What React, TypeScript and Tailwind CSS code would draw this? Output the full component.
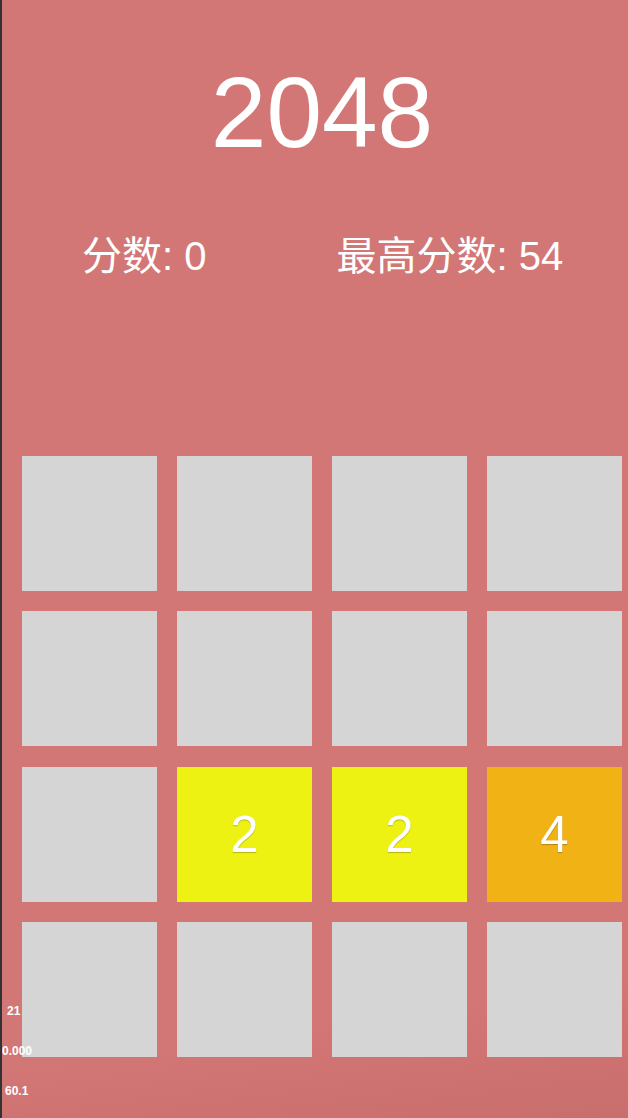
import React from "react";

const board = [
  [0, 0, 0, 0],
  [0, 0, 0, 0],
  [0, 2, 2, 4],
  [0, 0, 0, 0],
];

const tileColor: Record<number, string> = {
  0: "bg-[#d5d5d5]",
  2: "bg-[#eef213]",
  4: "bg-[#f0b214]",
};

export default function App() {
  return (
    <div
      className="relative min-h-[1118px] w-full overflow-hidden border-l-2 border-[#333333] bg-[#d37776] bg-[linear-gradient(172deg,#d37776_88%,#c86e6d_100%)] pl-[20px] text-white"
      style={{ fontFamily: '"Liberation Sans", "Noto Sans CJK SC", sans-serif' }}
    >
      <div className="w-[600px]">
        {/* Title */}
        <h1 className="pt-[62px] text-center text-[100px] leading-none font-normal">2048</h1>

        {/* Scores */}
        <div className="mt-[74px] flex text-[40px] leading-none">
          <span className="ml-[60px]">分数: 0</span>
          <span className="ml-[130px]">最高分数: 54</span>
        </div>

        {/* Board */}
        <div className="mt-[180px] grid grid-cols-[repeat(4,135px)] gap-x-[20px] gap-y-[20.4px]">
          {board.flat().map((v, i) => (
            <div
              key={i}
              className={`flex h-[135px] w-[135px] items-center justify-center text-[51px] leading-none [text-shadow:0_1px_1px_rgba(0,0,0,0.25)] ${tileColor[v]}`}
            >
              {v > 0 ? v : ""}
            </div>
          ))}
        </div>
      </div>

      {/* Stats overlay */}
      <div className="absolute top-[1005px] left-0 flex flex-col items-start gap-[28px] text-[12px] leading-none font-bold">
        <span className="ml-[5px]">21</span>
        <span className="ml-0">0.000</span>
        <span className="ml-[3px]">60.1</span>
      </div>
    </div>
  );
}
